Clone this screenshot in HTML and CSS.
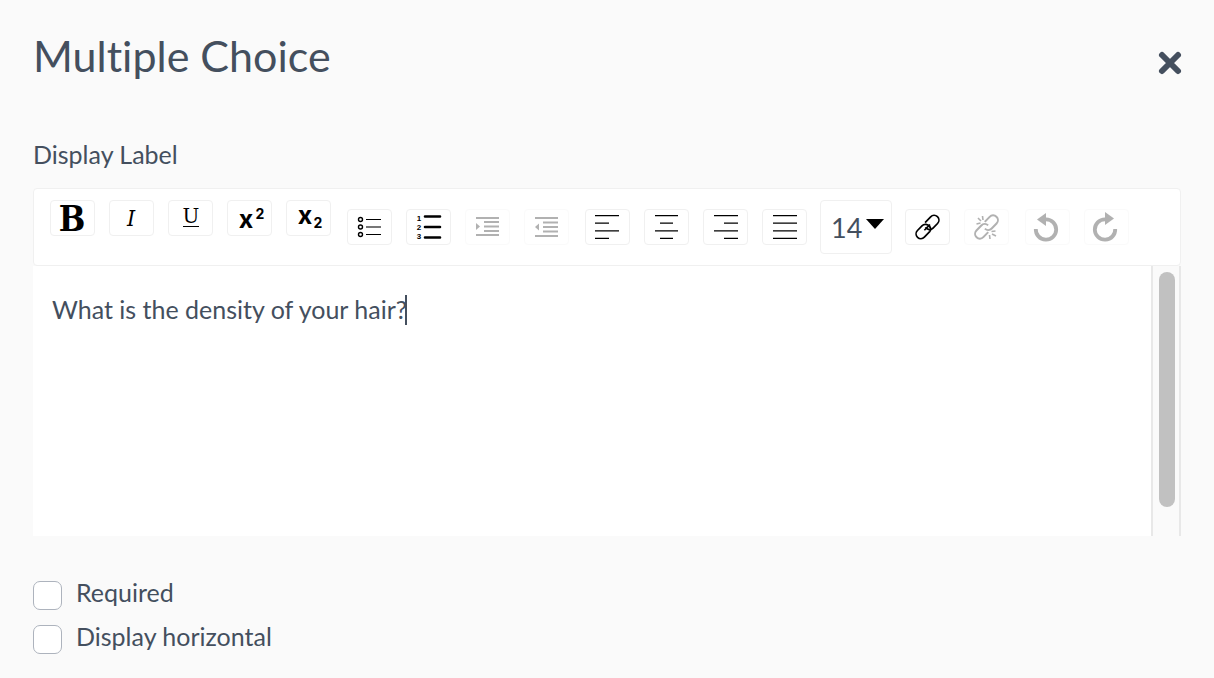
FILE: index.html
```html
<!DOCTYPE html>
<html lang="en">
<head>
  <meta charset="UTF-8" />
  <meta name="viewport" content="width=device-width, initial-scale=1" />
  <title>Multiple Choice</title>
  <link rel="stylesheet" href="styles.css">
</head>
<body>

  <header>
    <h1>Multiple Choice</h1>
    <button type="button" class="close" aria-label="Close">
      <svg width="22" height="24" viewBox="0 0 22 24"><path d="M3 4l16 16M19 4L3 20" /></svg>
    </button>
  </header>

  <form>
    <div class="label" id="displayLabel">Display Label</div>

    <div class="toolbar" role="toolbar" aria-label="Formatting">
      <!-- inline styles -->
      <div class="group inline">
        <button type="button" aria-label="Bold">
          <svg viewBox="0 0 43 34"><text class="slab bold" x="21" y="30" font-size="35">B</text></svg>
        </button>
        <button type="button" aria-label="Italic">
          <svg viewBox="0 0 43 34"><text class="slab italic" x="21" y="25" font-size="23">I</text></svg>
        </button>
        <button type="button" aria-label="Underline">
          <svg viewBox="0 0 43 34"><text class="slab wide" x="22" y="22" font-size="20">U</text><path d="M14 25.500h16" /></svg>
        </button>
        <button type="button" aria-label="Superscript">
          <svg viewBox="0 0 43 34"><text class="sans" x="18" y="27" font-size="25">x</text><text class="sans" x="32" y="18" font-size="14">2</text></svg>
        </button>
        <button type="button" aria-label="Subscript">
          <svg viewBox="0 0 43 34"><text class="sans" x="18" y="23" font-size="25">x</text><text class="sans" x="31" y="27" font-size="14">2</text></svg>
        </button>
      </div>

      <!-- lists -->
      <div class="group">
        <button type="button" aria-label="Bulleted list">
          <svg viewBox="0 0 43 34"><path d="M18 9.500h15M18 24.500h15" /><path d="M18 17h15" stroke="#777" stroke-width="2" /><g stroke-width="1.400"><circle cx="12.500" cy="9.500" r="2" /><circle cx="12.500" cy="17" r="2" /><circle cx="12.500" cy="24.500" r="2" /></g></svg>
        </button>
        <button type="button" aria-label="Numbered list">
          <svg viewBox="0 0 43 34"><g class="digits"><text x="12" y="11">1</text><text x="12" y="20">2</text><text x="12" y="29">3</text></g><path d="M18 6.500h15M18 17h15M18 27.500h15" stroke-width="2.600" stroke-linecap="round" /></svg>
        </button>
        <button type="button" aria-label="Indent" disabled>
          <svg viewBox="0 0 43 34"><path d="M10 8h23M10 25h23M18 12h15M18 16.500h15M18 21h15" stroke-width="1.800" /><path class="solid" d="M10 13l4 3.500-4 3.500z" /></svg>
        </button>
        <button type="button" aria-label="Outdent" disabled>
          <svg viewBox="0 0 43 34"><path d="M10 8h23M10 26h23M18 12.500h15M18 17h15M18 21.500h15" stroke-width="1.800" /><path class="solid" d="M14 13.500l-4 3.500 4 3.500z" /></svg>
        </button>
      </div>

      <!-- alignment -->
      <div class="group">
        <button type="button" aria-label="Align left">
          <svg viewBox="0 0 43 34"><path d="M9 5.600h24M9 13.200h14M9 20.800h24M9 28.400h14" stroke-width="1.300" /></svg>
        </button>
        <button type="button" aria-label="Align center">
          <svg viewBox="0 0 43 34"><path d="M10 5.600h23M15 13.200h13M10 20.800h23M15 28.400h13" stroke-width="1.300" /></svg>
        </button>
        <button type="button" aria-label="Align right">
          <svg viewBox="0 0 43 34"><path d="M10 5.600h24M20 13.200h14M10 20.800h24M20 28.400h14" stroke-width="1.300" /></svg>
        </button>
        <button type="button" aria-label="Justify">
          <svg viewBox="0 0 43 34"><path d="M10 5.600h24M10 13.200h24M10 20.800h24M10 28.400h24" stroke-width="1.300" /></svg>
        </button>
      </div>

      <div class="size">
        <select aria-label="Font size">
          <option>12</option>
          <option selected>14</option>
          <option>16</option>
          <option>18</option>
        </select>
        <svg width="18" height="10" viewBox="0 0 18 10"><path class="solid" d="M0 0h18L9 10z" /></svg>
      </div>

      <!-- links -->
      <div class="group">
        <button type="button" aria-label="Link">
          <svg viewBox="0 0 43 34">
            <g transform="rotate(-46 21.500 17)" stroke-width="1.700">
              <path d="M20 21.800H12a4.800 4.800 0 0 1 0-9.600h6.500a4.800 4.800 0 0 1 4.600 6" />
              <path d="M23 12.200h8a4.800 4.800 0 0 1 0 9.600h-6.500a4.800 4.800 0 0 1-4.600-6" />
              <path d="M17 17h8M20 21.800q3-.4 3.500-4" />
            </g>
          </svg>
        </button>
        <button type="button" aria-label="Remove link" disabled>
          <svg viewBox="0 0 43 34">
            <g transform="rotate(-46 21.500 17)" stroke-width="2">
              <path d="M19 21.800H12a4.800 4.800 0 0 1 0-9.600h7a4.800 4.800 0 0 1 4.800 4.800" />
              <path d="M24 12.200h7a4.800 4.800 0 0 1 0 9.600h-7a4.800 4.800 0 0 1-4.800-4.800" />
            </g>
            <path d="M13 8l3 3M11.500 14l4-1M17.500 6l.5 4M26.500 21.500l4-.5M27 24l4 2M24.500 25l.5 4" stroke-width="1.600" />
          </svg>
        </button>
      </div>

      <!-- history -->
      <div class="group">
        <button type="button" aria-label="Undo" disabled>
          <svg viewBox="0 0 43 34"><path d="M9.800 19A10.200 10.200 0 1 0 20 9.300" stroke-width="3.800" /><path class="solid" d="M20 3v13l-9-6.500z" /></svg>
        </button>
        <button type="button" aria-label="Redo" disabled>
          <svg viewBox="0 0 43 34"><path d="M30.200 19A10.200 10.200 0 1 1 20 9.300" stroke-width="3.800" /><path class="solid" d="M20 2v13l9-6.500z" /></svg>
        </button>
      </div>
    </div>

    <div class="editor">
      <div class="text" contenteditable="true" role="textbox" aria-labelledby="displayLabel">What is the density of your hair?<span class="caret"></span></div>
      <div class="track"><div class="thumb"></div></div>
    </div>

    <div class="options">
      <label><input type="checkbox" name="required" /> Required</label>
      <label><input type="checkbox" name="horizontal" /> Display horizontal</label>
    </div>
  </form>

</body>
</html>
```
FILE: styles.css
```css
* {
  box-sizing: border-box;
}
body {
  font-family: Lato, sans-serif;
  font-size: 25px;
  font-variant-ligatures: none;
  line-height: 32px;
  color: #444f5e;
  background: #fafafa;
  margin: 0;
  padding: 28px 33px 24px;
}
header {
  display: flex;
  justify-content: space-between;
  align-items: center;
}
h1 {
  margin: 0;
  font-size: 43px;
  font-weight: 400;
  line-height: 56px;
}
svg {
  display: block;
  overflow: visible;
  fill: none;
  stroke: currentColor;
}
svg text,
.solid {
  fill: currentColor;
  stroke: none;
}
svg text {
  text-anchor: middle;
}
.close {
  margin-top: 14px;
  padding: 0;
  border: none;
  background: none;
  color: #444f5e;
}
.close path {
  stroke-width: 6;
  stroke-linecap: round;
}
.label {
  margin: 54px 0 18px;
}

/* toolbar */
.toolbar {
  display: flex;
  align-items: center;
  gap: 16px;
  padding: 11px 16px;
  background: #fff;
  border: 1px solid #f0f0f0;
  border-radius: 4px;
  color: #000;
}
.group {
  display: flex;
  gap: 14px;
}
.inline {
  align-self: flex-start;
}
.group button {
  width: 45px;
  height: 36px;
  padding: 0;
  background: #fff;
  border: 1px solid #f0f0f0;
  border-radius: 4px;
  color: #000;
}
.group button:disabled {
  opacity: 0.3;
}
.slab {
  font-family: "DejaVu Serif Condensed", "DejaVu Serif", serif;
}
.wide {
  font-family: "DejaVu Serif", serif;
}
.bold {
  font-weight: bold;
}
.italic {
  font-style: italic;
}
.sans {
  font-family: Inter, sans-serif;
  font-weight: bold;
}
.digits {
  font-family: "Liberation Sans", sans-serif;
  font-size: 8px;
  font-weight: bold;
}
.size {
  position: relative;
  margin: 0 -3px;
}
.size select {
  display: block;
  width: 72px;
  height: 54px;
  padding: 0 10px;
  appearance: none;
  background: #fff;
  border: 1px solid #f0f0f0;
  border-radius: 4px;
  color: #444f5e;
  font: 27px Lato, sans-serif;
}
.size svg {
  position: absolute;
  top: 19px;
  right: 8px;
  pointer-events: none;
}

/* text area */
.editor {
  display: flex;
  min-height: 270px;
  background: #fff;
}
.text {
  flex: 1;
  padding: 27px 19px;
  outline: none;
}
.caret {
  display: inline-block;
  width: 2px;
  height: 30px;
  margin: 0 -2px;
  background: #444f5e;
  vertical-align: -6px;
}
.track {
  width: 30px;
  padding: 6px;
  background: #fafafa;
  border: solid #e8e8e8;
  border-width: 0 2px;
}
.thumb {
  width: 16px;
  height: 235px;
  border-radius: 8px;
  background: #c1c1c1;
}

.options {
  display: grid;
  justify-items: start;
  gap: 10px;
  margin-top: 40px;
}
.options label {
  display: flex;
  gap: 14px;
}
.options input {
  width: 29px;
  height: 29px;
  margin: 5px 0 0;
  appearance: none;
  background: #fff;
  border: 1px solid #adb3bd;
  border-radius: 7px;
}
```
